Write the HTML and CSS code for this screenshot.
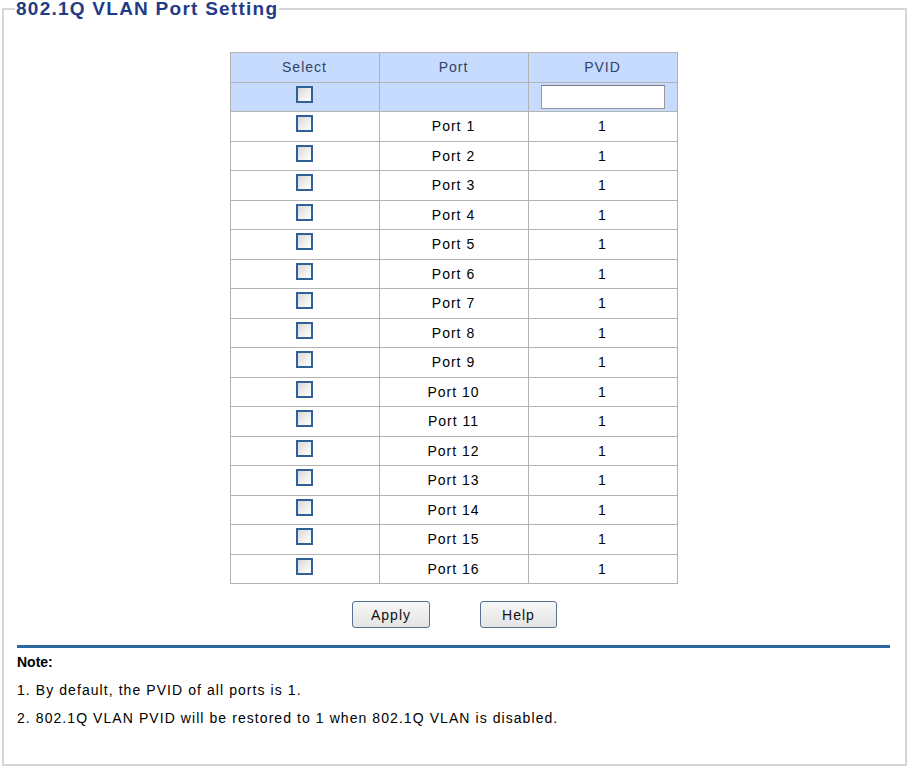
FILE: index.html
```html
<!DOCTYPE html>
<html>
<head>
<meta charset="utf-8">
<link rel="stylesheet" href="styles.css">
</head>
<body>
<fieldset class="panel">
  <legend class="title">802.1Q VLAN Port Setting</legend>
  <table class="grid">
    <thead>
      <tr class="head"><th>Select</th><th>Port</th><th>PVID</th></tr>
      <tr class="head"><td><span class="cb"></span></td><td></td><td><input class="pvid" type="text"></td></tr>
    </thead>
    <tbody>
      <tr><td><span class="cb"></span></td><td>Port 1</td><td>1</td></tr>
      <tr><td><span class="cb"></span></td><td>Port 2</td><td>1</td></tr>
      <tr><td><span class="cb"></span></td><td>Port 3</td><td>1</td></tr>
      <tr><td><span class="cb"></span></td><td>Port 4</td><td>1</td></tr>
      <tr><td><span class="cb"></span></td><td>Port 5</td><td>1</td></tr>
      <tr><td><span class="cb"></span></td><td>Port 6</td><td>1</td></tr>
      <tr><td><span class="cb"></span></td><td>Port 7</td><td>1</td></tr>
      <tr><td><span class="cb"></span></td><td>Port 8</td><td>1</td></tr>
      <tr><td><span class="cb"></span></td><td>Port 9</td><td>1</td></tr>
      <tr><td><span class="cb"></span></td><td>Port 10</td><td>1</td></tr>
      <tr><td><span class="cb"></span></td><td>Port 11</td><td>1</td></tr>
      <tr><td><span class="cb"></span></td><td>Port 12</td><td>1</td></tr>
      <tr><td><span class="cb"></span></td><td>Port 13</td><td>1</td></tr>
      <tr><td><span class="cb"></span></td><td>Port 14</td><td>1</td></tr>
      <tr><td><span class="cb"></span></td><td>Port 15</td><td>1</td></tr>
      <tr><td><span class="cb"></span></td><td>Port 16</td><td>1</td></tr>
    </tbody>
  </table>
  <div class="actions">
    <button class="btn btn-apply">Apply</button>
    <button class="btn btn-help">Help</button>
  </div>
  <div class="rule"></div>
  <div class="notes">
    <p class="note-title">Note:</p>
    <p>1. By default, the PVID of all ports is 1.</p>
    <p>2. 802.1Q VLAN PVID will be restored to 1 when 802.1Q VLAN is disabled.</p>
  </div>
</fieldset>
</body>
</html>
```

FILE: styles.css
```css
html, body {
  margin: 0;
  padding: 0;
  background: #ffffff;
}
body {
  font-family: "Liberation Sans", Arial, sans-serif;
  font-size: 14px;
  color: #000;
}
.panel {
  margin: 0 0 0 2px;
  width: 904px;
  height: 766px;
  box-sizing: border-box;
  border: 2px solid #d6d6d6;
  padding: 0 15px 0 13px;
}
.title {
  font-size: 19px;
  font-weight: bold;
  color: #1f3c88;
  padding: 0 1px;
  margin-left: -2px;
  line-height: 18px;
  letter-spacing: 1.25px;
}
.grid {
  border-collapse: collapse;
  margin: 34px auto 0;
  width: 448px;
  table-layout: fixed;
  font-size: 14px;
  letter-spacing: 1px;
}
.grid th, .grid td {
  border: 1px solid #b3b3b3;
  text-align: center;
  padding: 0;
  height: 28.5px;
  font-weight: normal;
}
.grid tr.head th, .grid tr.head td {
  background: #c6dbfd;
  color: #34426a;
}
.cb {
  display: inline-block;
  width: 13px;
  height: 13px;
  border: 2px solid #2f6098;
  background: linear-gradient(135deg, #d8d8d8 0%, #f0f0f0 60%, #ffffff 100%);
  vertical-align: middle;
  position: relative;
  top: -3px;
}
.pvid {
  width: 124px;
  height: 24px;
  box-sizing: border-box;
  border: 1px solid #9a9a9a;
  border-top-color: #7a7a7a;
  background: #fff;
  margin: 0;
  vertical-align: middle;
}
.actions {
  display: flex;
  justify-content: center;
  gap: 50px;
  margin-top: 17px;
  padding-left: 2px;
}
.btn {
  height: 27px;
  border: 1px solid #56708f;
  border-radius: 3px;
  background: linear-gradient(#f7f7f7, #e4e4e4);
  font-family: "Liberation Sans", Arial, sans-serif;
  font-size: 14px;
  letter-spacing: 1px;
  color: #111;
  padding: 0;
}
.btn-apply { width: 78px; }
.btn-help { width: 77px; }
.rule {
  height: 3px;
  background: #2d67a0;
  margin: 17px 0 0 0;
  width: 873px;
}
.notes {
  letter-spacing: 1.07px;
}
.notes p {
  margin: 0;
  line-height: 28px;
}
.notes .note-title {
  font-weight: bold;
  letter-spacing: 0;
  margin-top: 0;
}
```
